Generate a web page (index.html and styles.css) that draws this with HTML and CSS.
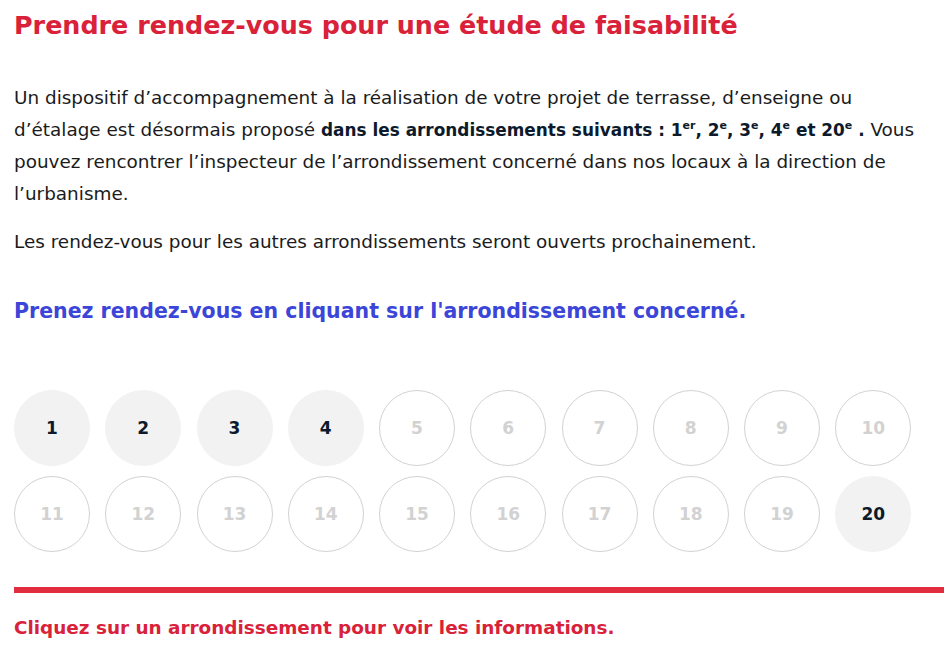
FILE: index.html
```html
<!DOCTYPE html>
<html lang="fr">
<head>
  <meta charset="UTF-8" />
  <meta name="viewport" content="width=device-width, initial-scale=1.0"/>
  <title>Étude de faisabilité</title>
  <link rel="stylesheet" href="styles.css">
</head>
<body>

<h1 class="page-title">Prendre rendez-vous pour une étude de faisabilité</h1>

<div class="intro">
  <p>Un dispositif d’accompagnement à la réalisation de votre projet de terrasse, d’enseigne ou d’étalage est désormais proposé <strong>dans les arrondissements suivants : 1<sup>er</sup>, 2<sup>e</sup>, 3<sup>e</sup>, 4<sup>e</sup> et 20<sup>e</sup> .</strong> Vous pouvez rencontrer l’inspecteur de l’arrondissement concerné dans nos locaux à la direction de l’urbanisme.</p>
  <p>Les rendez-vous pour les autres arrondissements seront ouverts prochainement.</p>
</div>

<h2 class="cta">Prenez rendez-vous en cliquant sur l'arrondissement concerné.</h2>

<div class="arr-grid">
  <button class="arr active">1</button>
  <button class="arr active">2</button>
  <button class="arr active">3</button>
  <button class="arr active">4</button>
  <button class="arr">5</button>
  <button class="arr">6</button>
  <button class="arr">7</button>
  <button class="arr">8</button>
  <button class="arr">9</button>
  <button class="arr">10</button>
  <button class="arr">11</button>
  <button class="arr">12</button>
  <button class="arr">13</button>
  <button class="arr">14</button>
  <button class="arr">15</button>
  <button class="arr">16</button>
  <button class="arr">17</button>
  <button class="arr">18</button>
  <button class="arr">19</button>
  <button class="arr active">20</button>
</div>

<div class="info-box">
  <p class="info-msg">Cliquez sur un arrondissement pour voir les informations.</p>
</div>

</body>
</html>
```
FILE: styles.css
```css
body {
  font-family: "DejaVu Sans", sans-serif;
  color: #1b1b1b;
  background: #fff;
  margin: 0;
  padding: 0 6px 0 14px;
}
.page-title {
  color: #d9213a;
  font-size: 25.4px;
  font-weight: bold;
  margin: 8px 0 0;
  line-height: 34px;
}
.intro {
  margin-top: 40px;
}
.intro p {
  font-size: 18.4px;
  line-height: 32px;
  margin: 0 0 16px;
}
.intro strong {
  color: #0c1a2b;
  font-size: 16.9px;
}
.intro sup {
  font-size: 11px;
  line-height: 1;
  vertical-align: 7px;
}
.cta {
  color: #3b46d8;
  font-size: 20.5px;
  font-weight: bold;
  margin: 38px 0 0;
  line-height: 30px;
}
.arr-grid {
  display: grid;
  grid-template-columns: repeat(10, 76px);
  column-gap: 15.25px;
  row-gap: 10px;
  margin-top: 64px;
}
.arr {
  width: 76px;
  height: 76px;
  border-radius: 50%;
  border: 1px solid #d2d2d2;
  background: #fff;
  color: #d2d2d2;
  font-family: "DejaVu Sans", sans-serif;
  font-weight: bold;
  font-size: 17px;
  padding: 0;
  cursor: default;
}
.arr.active {
  background: #f2f2f2;
  border-color: #f2f2f2;
  color: #0c1a2b;
  cursor: pointer;
}
.info-box {
  border-top: 6px solid #e22c40;
  margin-top: 35px;
}
.info-msg {
  color: #d9213a;
  font-weight: bold;
  font-size: 18.4px;
  margin: 24px 0 0;
}
```
